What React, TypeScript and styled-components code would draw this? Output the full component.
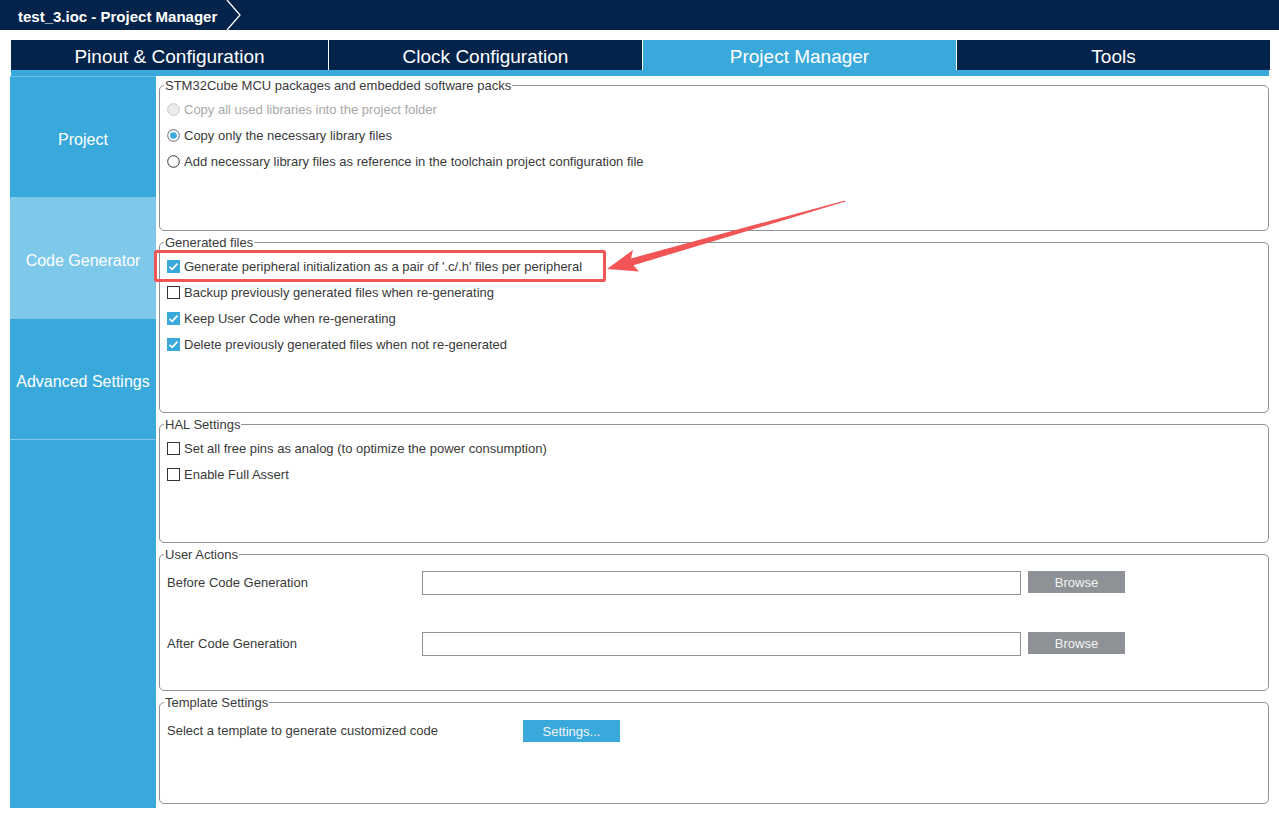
import * as React from 'react';
import styled, { createGlobalStyle } from 'styled-components';

const navy = '#03234b';
const blue = '#39a9dc';
const lightBlue = '#7ec8ea';
const line = '#8e9196';
const ink = '#3a3a3a';
const red = '#f25555';

const GlobalStyle = createGlobalStyle`
  html, body {
    margin: 0;
    padding: 0;
    background: #ffffff;
    font-family: "Liberation Sans", Arial, sans-serif;
  }
`;

const Page = styled.div`
  position: relative;
  width: 1279px;
  height: 818px;
  overflow: hidden;
  background: #ffffff;
`;

const TitleBar = styled.div`
  height: 30px;
  background: ${navy};
  display: flex;
  align-items: center;
  padding-left: 18px;
  gap: 9px;
`;

const TitleText = styled.span`
  color: #ffffff;
  font-weight: bold;
  font-size: 15px;
  padding-top: 2px;
`;

const Tabs = styled.div`
  margin: 10px 0 0 11px;
  width: 1259px;
  display: grid;
  grid-template-columns: 317px 313px 313px 313px;
  column-gap: 1px;
  background: #ffffff;
`;

const Tab = styled.div<{ $active?: boolean }>`
  height: 30px;
  box-sizing: border-box;
  padding-top: 3px;
  background: ${p => (p.$active ? blue : navy)};
  color: #ffffff;
  font-size: 19px;
  display: flex;
  align-items: center;
  justify-content: center;
`;

const TabStrip = styled.div`
  margin-left: 11px;
  width: 1258px;
  height: 6px;
  background: ${blue};
`;

const Body = styled.div`
  display: flex;
  gap: 3px;
  padding-left: 10px;
`;

const Sidebar = styled.div`
  width: 146px;
  height: 732px;
  background: ${blue};
  border-top: 1px solid #6cc0e6;
  box-sizing: border-box;
  display: flex;
  flex-direction: column;
`;

const SideItem = styled.div<{ $active?: boolean }>`
  height: 121px;
  box-sizing: border-box;
  border-bottom: 1px solid ${lightBlue};
  background: ${p => (p.$active ? lightBlue : blue)};
  color: #ffffff;
  font-size: 16px;
  display: flex;
  align-items: center;
  justify-content: center;
  padding-top: 5px;
`;

const Content = styled.div`
  width: 1110px;
  padding-top: 2px;
  display: flex;
  flex-direction: column;
  gap: 4px;
`;

const Group = styled.fieldset<{ $h: number }>`
  margin: 0;
  min-width: 0;
  height: ${p => p.$h}px;
  box-sizing: border-box;
  border: 1px solid ${line};
  border-radius: 5px;
  padding: 0 8px 0 7px;
`;

const Legend = styled.legend`
  font-size: 13px;
  line-height: 15px;
  color: ${ink};
  padding: 0 1px;
  margin-left: -3px;
`;

const List = styled.div`
  padding-top: 3px;
  display: flex;
  flex-direction: column;
`;

const Option = styled.div<{ $disabled?: boolean }>`
  height: 26px;
  display: flex;
  align-items: center;
  gap: 4px;
  font-size: 13px;
  color: ${p => (p.$disabled ? '#a8a8a8' : ink)};

  svg {
    flex: none;
  }
`;

const ActionRows = styled.div`
  padding-top: 9px;
  display: flex;
  flex-direction: column;
  gap: 37px;
`;

const ActionRow = styled.div`
  display: grid;
  grid-template-columns: 248px 599px 97px;
  column-gap: 7px;
  align-items: start;
  height: 24px;
`;

const Label = styled.span`
  font-size: 13px;
  color: ${ink};
  line-height: 24px;
`;

const PathInput = styled.div`
  height: 24px;
  box-sizing: border-box;
  border: 1px solid ${line};
  background: #ffffff;
`;

const Button = styled.div<{ $tone: 'gray' | 'blue' }>`
  height: 22px;
  background: ${p => (p.$tone === 'blue' ? blue : line)};
  color: #f4f4f4;
  font-size: 13px;
  display: flex;
  align-items: center;
  justify-content: center;
`;

const TemplateRow = styled.div`
  padding-top: 9px;
  display: grid;
  grid-template-columns: 356px 97px;
  align-items: center;
`;

const Overlay = styled.svg`
  position: absolute;
  left: 0;
  top: 0;
  pointer-events: none;
`;

const Chevron = () => (
  <svg width="16" height="30" viewBox="0 0 16 30">
    <polyline points="1,0 14,15 1,30" fill="none" stroke="#ffffff" strokeWidth="1.3" />
  </svg>
);

const CheckBox: React.FC<{ checked?: boolean }> = ({ checked }) =>
  checked ? (
    <svg width="13" height="13" viewBox="0 0 13 13">
      <rect x="0" y="0" width="13" height="13" fill={blue} />
      <polyline points="2.5,6.8 5.2,9.3 10.5,3.6" fill="none" stroke="#ffffff" strokeWidth="1.8" />
    </svg>
  ) : (
    <svg width="13" height="13" viewBox="0 0 13 13">
      <rect x="0.5" y="0.5" width="12" height="12" fill="#ffffff" stroke="#333333" />
    </svg>
  );

const Radio: React.FC<{ checked?: boolean; disabled?: boolean }> = ({ checked, disabled }) => (
  <svg width="13" height="13" viewBox="0 0 13 13">
    <circle
      cx="6.5"
      cy="6.5"
      r="5.8"
      fill={disabled ? '#ececec' : '#ffffff'}
      stroke={disabled ? '#c4c4c4' : checked ? '#5a6a78' : '#333333'}
      strokeWidth="1"
    />
    {checked && <circle cx="6.5" cy="6.5" r="3.3" fill={blue} />}
  </svg>
);

const tabs = ['Pinout & Configuration', 'Clock Configuration', 'Project Manager', 'Tools'];

const generated = [
  { text: "Generate peripheral initialization as a pair of '.c/.h' files per peripheral", checked: true },
  { text: 'Backup previously generated files when re-generating', checked: false },
  { text: 'Keep User Code when re-generating', checked: true },
  { text: 'Delete previously generated files when not re-generated', checked: true },
];

export default function App() {
  return (
    <Page>
      <GlobalStyle />
      <TitleBar>
        <TitleText>test_3.ioc - Project Manager</TitleText>
        <Chevron />
      </TitleBar>

      <Tabs>
        {tabs.map(t => (
          <Tab key={t} $active={t === 'Project Manager'}>{t}</Tab>
        ))}
      </Tabs>
      <TabStrip />

      <Body>
        <Sidebar>
          <SideItem>Project</SideItem>
          <SideItem $active>Code Generator</SideItem>
          <SideItem>Advanced Settings</SideItem>
        </Sidebar>

        <Content>
          <Group $h={153}>
            <Legend>STM32Cube MCU packages and embedded software packs</Legend>
            <List>
              <Option $disabled>
                <Radio disabled />
                Copy all used libraries into the project folder
              </Option>
              <Option>
                <Radio checked />
                Copy only the necessary library files
              </Option>
              <Option>
                <Radio />
                Add necessary library files as reference in the toolchain project configuration file
              </Option>
            </List>
          </Group>

          <Group $h={178}>
            <Legend>Generated files</Legend>
            <List>
              {generated.map(g => (
                <Option key={g.text}>
                  <CheckBox checked={g.checked} />
                  {g.text}
                </Option>
              ))}
            </List>
          </Group>

          <Group $h={126}>
            <Legend>HAL Settings</Legend>
            <List>
              <Option>
                <CheckBox />
                Set all free pins as analog (to optimize the power consumption)
              </Option>
              <Option>
                <CheckBox />
                Enable Full Assert
              </Option>
            </List>
          </Group>

          <Group $h={144}>
            <Legend>User Actions</Legend>
            <ActionRows>
              <ActionRow>
                <Label>Before Code Generation</Label>
                <PathInput />
                <Button $tone="gray">Browse</Button>
              </ActionRow>
              <ActionRow>
                <Label>After Code Generation</Label>
                <PathInput />
                <Button $tone="gray">Browse</Button>
              </ActionRow>
            </ActionRows>
          </Group>

          <Group $h={109}>
            <Legend>Template Settings</Legend>
            <TemplateRow>
              <Label>Select a template to generate customized code</Label>
              <Button $tone="blue">Settings...</Button>
            </TemplateRow>
          </Group>
        </Content>
      </Body>

      {/* annotation drawn over the screenshot */}
      <Overlay width="1279" height="818" viewBox="0 0 1279 818">
        <rect x="155.5" y="251.5" width="449" height="29" rx="1" fill="none" stroke={red} strokeWidth="3" />
        <polygon
          points="607,269 633,250 631,258.4 845,200.4 845.4,201.6 633.5,265.2 639,271.5"
          fill={red}
        />
      </Overlay>
    </Page>
  );
}
